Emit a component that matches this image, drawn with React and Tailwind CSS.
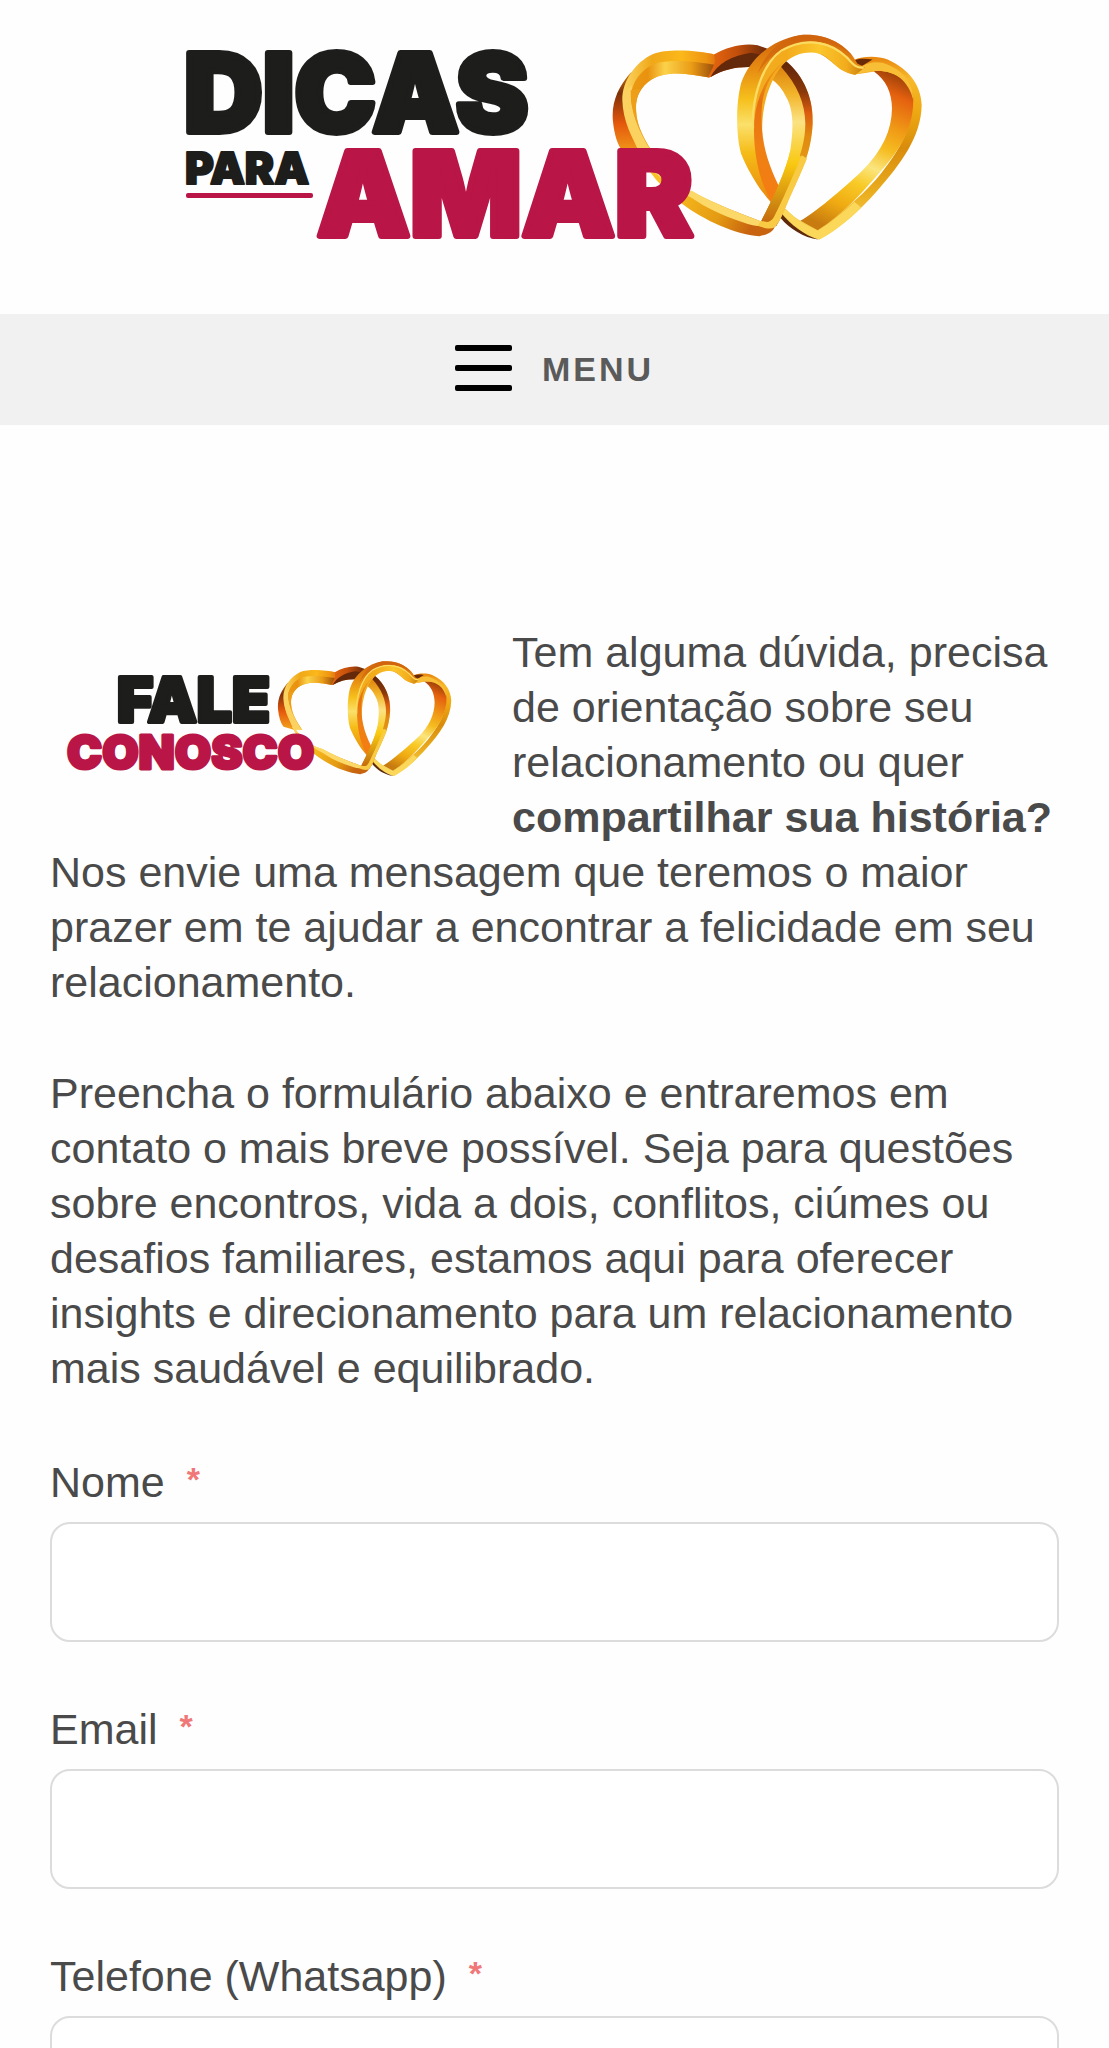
import React, { useState } from 'react';

const fields = [
  { id: 'nome', label: 'Nome', type: 'text' },
  { id: 'email', label: 'Email', type: 'email' },
  { id: 'telefone', label: 'Telefone (Whatsapp)', type: 'tel' },
];

// Two interlaced golden hearts, shared by both logos
const Rings = ({ id, ...props }) => (
  <svg viewBox="153 43 930 615" {...props}>
    <defs>
      <linearGradient id={`${id}-side`} x1="0" y1="0" x2="0" y2="1">
        <stop offset="0" stopColor="#c9780f" />
        <stop offset="0.25" stopColor="#7d3008" />
        <stop offset="0.6" stopColor="#e4570c" />
        <stop offset="1" stopColor="#f3a51c" />
      </linearGradient>
      <linearGradient id={`${id}-top`} x1="0" y1="0" x2="1" y2="0">
        <stop offset="0" stopColor="#fbd664" />
        <stop offset="0.3" stopColor="#f0a818" />
        <stop offset="0.6" stopColor="#fbb81a" />
        <stop offset="0.85" stopColor="#ee9412" />
        <stop offset="1" stopColor="#dc640e" />
      </linearGradient>
      <linearGradient id={`${id}-inner`} x1="0" y1="0" x2="1" y2="0">
        <stop offset="0" stopColor="#ea9a14" />
        <stop offset="0.2" stopColor="#e9920f" />
        <stop offset="0.4" stopColor="#fbd24a" />
        <stop offset="0.7" stopColor="#eb9c16" />
        <stop offset="1" stopColor="#8f4208" />
      </linearGradient>
      <linearGradient id={`${id}-lobe`} x1="0" y1="0" x2="1" y2="0">
        <stop offset="0" stopColor="#e9680f" />
        <stop offset="0.45" stopColor="#c4500c" />
        <stop offset="1" stopColor="#5e240a" />
      </linearGradient>
      <linearGradient id={`${id}-edge`} x1="0" y1="0" x2="0" y2="1">
        <stop offset="0" stopColor="#5e240a" />
        <stop offset="0.25" stopColor="#8a3809" />
        <stop offset="0.42" stopColor="#dc5d10" />
        <stop offset="0.6" stopColor="#e08a10" />
        <stop offset="1" stopColor="#e7a51c" />
      </linearGradient>
      <linearGradient id={`${id}-right`} gradientUnits="userSpaceOnUse" x1="0" y1="150" x2="0" y2="620">
        <stop offset="0" stopColor="#e08a12" />
        <stop offset="0.15" stopColor="#f2b42a" />
        <stop offset="0.33" stopColor="#fbe283" />
        <stop offset="0.6" stopColor="#f9c810" />
        <stop offset="0.85" stopColor="#d08a10" />
        <stop offset="1" stopColor="#c2620e" />
      </linearGradient>
      <linearGradient id={`${id}-bottom`} x1="0" y1="0" x2="1" y2="0.3">
        <stop offset="0" stopColor="#fbc92e" />
        <stop offset="0.4" stopColor="#f7b91d" />
        <stop offset="0.75" stopColor="#e49a12" />
        <stop offset="1" stopColor="#c8640f" />
      </linearGradient>
      <linearGradient id={`${id}-front`} x1="0" y1="0" x2="0" y2="1">
        <stop offset="0" stopColor="#d0620c" />
        <stop offset="0.2" stopColor="#e78c12" />
        <stop offset="0.38" stopColor="#f6c01c" />
        <stop offset="0.53" stopColor="#fbe06a" />
        <stop offset="0.7" stopColor="#f5bb16" />
        <stop offset="1" stopColor="#e8860f" />
      </linearGradient>
      <linearGradient id={`${id}-rim`} x1="0" y1="0" x2="1" y2="0">
        <stop offset="0" stopColor="#f2ac20" />
        <stop offset="0.3" stopColor="#f3ab1c" />
        <stop offset="0.6" stopColor="#fbc62c" />
        <stop offset="0.85" stopColor="#f3ac1c" />
        <stop offset="1" stopColor="#c9800f" />
      </linearGradient>
      <linearGradient id={`${id}-orange`} x1="0" y1="0" x2="0" y2="1">
        <stop offset="0" stopColor="#f0a01a" />
        <stop offset="0.3" stopColor="#e8700f" />
        <stop offset="0.6" stopColor="#ee8014" />
        <stop offset="1" stopColor="#f57c12" />
      </linearGradient>
      <linearGradient id={`${id}-wall`} gradientUnits="userSpaceOnUse" x1="1010" y1="150" x2="800" y2="620">
        <stop offset="0" stopColor="#8f3a08" />
        <stop offset="0.14" stopColor="#e5610f" />
        <stop offset="0.32" stopColor="#f09a16" />
        <stop offset="0.45" stopColor="#f5bc20" />
        <stop offset="0.58" stopColor="#fbe57e" />
        <stop offset="0.7" stopColor="#f8ca26" />
        <stop offset="0.85" stopColor="#f0ab12" />
        <stop offset="1" stopColor="#c87c10" />
      </linearGradient>
      <linearGradient id={`${id}-outer`} x1="0" y1="0" x2="0" y2="1">
        <stop offset="0" stopColor="#e8860f" />
        <stop offset="0.12" stopColor="#f8b82a" />
        <stop offset="0.3" stopColor="#eea812" />
        <stop offset="0.5" stopColor="#d98c0c" />
        <stop offset="0.75" stopColor="#eaae1e" />
        <stop offset="1" stopColor="#fbdc62" />
      </linearGradient>
    </defs>

    {/* left heart */}
    <path d="M212 155C170 200 150 250 156 305C160 345 170 375 185 395L245 412C205 350 185 260 212 155Z" fill={`url(#${id}-side)`} />
    <path d="M460 103C420 92 320 84 275 102C225 125 183 180 184 240C186 300 210 350 240 402L285 412C240 345 226 310 225 262C225 215 255 178 300 166C350 152 400 165 445 172C455 160 470 140 480 120Z" fill={`url(#${id}-top)`} />
    <path d="M462 134C420 128 350 116 290 128C240 145 212 185 208 235C206 262 212 290 225 315C222 290 223 262 226 245C232 210 260 176 300 166C350 152 400 165 445 172C452 162 462 148 470 136Z" fill={`url(#${id}-inner)`} />
    <path d="M192 215C180 280 205 340 245 410L285 412C240 345 222 310 210 240L212 195Z" fill="#fbd260" />
    <path d="M209 210C208 270 228 325 272 395L285 412C240 345 226 310 225 262C225 240 230 222 238 207Z" fill="#ee9f1a" />
    <path d="M459 103C500 80 545 68 590 75L632 90L600 143C545 136 490 145 450 170L440 172C452 155 455 140 462 125Z" fill={`url(#${id}-lobe)`} />
    <path d="M448 171C470 130 510 108 570 98L625 108L600 143C545 136 495 143 448 171Z" fill="#64280a" />
    <path d="M240 395C290 470 340 500 395 515C460 552 545 582 600 604L640 598C647 620 640 640 595 648C520 642 430 600 365 552C310 510 270 470 230 395Z" fill={`url(#${id}-bottom)`} />
    <path d="M240 395C290 475 340 500 395 513C460 552 545 582 600 603L640 598L632 610C612 624 580 618 545 606C480 585 430 560 395 535C330 500 270 460 230 395Z" fill="#fbd868" />
    <path d="M668 120C730 165 758 240 755 310C750 400 718 460 685 530C670 570 660 595 645 618L600 604C645 515 675 450 688 390C698 320 698 270 675 230C665 208 650 190 630 176L650 140Z" fill={`url(#${id}-right)`} />
    <path d="M672 120C732 168 758 240 755 310C750 400 725 440 700 500L695 470C720 400 733 360 733 310C732 250 710 195 660 140Z" fill={`url(#${id}-edge)`} />

    {/* right heart */}
    <path d="M882 118C905 108 950 106 980 118C1045 148 1080 195 1082 255C1080 350 1020 430 950 510C890 580 820 635 775 658C735 650 690 615 660 580L672 565C690 582 705 595 722 604L770 628C850 575 920 510 960 460C1030 370 1055 310 1055 240C1055 200 1010 155 945 153L888 162Z" fill={`url(#${id}-outer)`} />
    <path d="M938 153C1000 148 1052 180 1057 235C1058 310 1030 370 975 435C910 510 850 580 770 630L718 602C760 578 840 512 905 450C965 390 992 330 993 265C992 215 975 180 938 153Z" fill={`url(#${id}-wall)`} />
    <path d="M880 120C900 114 915 115 935 118L905 136L892 140Z" fill="#6a2a08" />
    <path d="M883 163C895 138 925 120 965 128C1030 150 1056 190 1057 240C1042 180 1000 148 938 153L905 158Z" fill="#f8be35" />
    <path d="M662 578L674 566C690 584 705 596 722 606C740 618 758 628 772 632C800 615 850 575 880 545L900 562C860 605 810 640 775 658C735 650 690 615 662 585Z" fill="#fbd75a" />
    <path d="M660 578C690 615 730 645 772 658C728 653 685 625 660 595Z" fill="#5e2a0a" />
    <path d="M889 130C855 65 785 38 715 45C635 58 565 115 540 190C525 250 524 340 540 400C560 450 595 510 635 552L650 497C590 420 578 320 600 240C620 170 665 92 740 90C800 95 820 150 883 164L912 142Z" fill={`url(#${id}-front)`} />
    <path d="M905 146C885 150 870 125 850 105C825 75 775 58 725 66C645 82 590 165 581 240C570 320 585 380 600 430L640 500C600 410 595 310 615 235C640 150 680 97 750 97C815 98 810 152 883 164Z" fill={`url(#${id}-rim)`} />
    <path d="M683 115C635 150 605 200 602 270C598 350 615 420 653 497L635 550C595 490 574 390 580 300C588 220 625 150 683 115Z" fill={`url(#${id}-orange)`} />
    <path d="M576 325C572 240 600 135 660 92C740 45 815 70 858 112C880 138 890 145 908 142" fill="none" stroke="#fbdc62" strokeWidth="7" />
    <path d="M715 45C780 38 840 60 884 118C850 78 790 55 722 63C670 72 620 110 590 160C610 105 650 60 715 45Z" fill="#cf640e" opacity="0.65" />

    {/* the left heart passes back over the right one near its tip */}
    <path d="M688 390C675 450 645 515 600 604L645 618C660 595 670 570 685 530C700 500 715 465 735 420L700 395Z" fill={`url(#${id}-right)`} />
    <path d="M738 415C715 470 690 525 670 570C660 595 652 610 640 622C625 630 605 622 590 616L600 602C620 608 628 606 638 592C665 540 695 470 722 405Z" fill="#f9cb44" />
  </svg>
);

const SiteLogo = () => (
  <svg viewBox="0 0 744 252" className="w-[744px] max-w-full" role="img" aria-label="Dicas para Amar">
    <Rings id="site" x="429" y="20" width="310" height="206" />
    <g fontFamily="Inter, sans-serif" fontWeight="900" strokeLinejoin="round">
      <text x="1" y="118" fontSize="109" fontKerning="none" fill="#1d1d1b" stroke="#1d1d1b" strokeWidth="6">DICAS</text>
      <text x="2" y="170" fontSize="44" fontKerning="none" fill="#1d1d1b" stroke="#1d1d1b" strokeWidth="2">PARA</text>
      <text x="134" y="222" fontSize="117" fontKerning="none" fill="#b91547" stroke="#b91547" strokeWidth="6">AMAR</text>
    </g>
    <rect x="3" y="179" width="127" height="5" rx="2" fill="#b91547" />
  </svg>
);

const ContactLogo = () => (
  <svg viewBox="0 0 432 160" className="w-full" role="img" aria-label="Fale Conosco">
    <Rings id="contact" x="227" y="36" width="175" height="115" />
    <g fontFamily="Inter, sans-serif" fontWeight="900" strokeLinejoin="round">
      <text x="67" y="97" fontSize="62" fontKerning="none" fill="#1d1d1b" stroke="#1d1d1b" strokeWidth="4">FALE</text>
      <text x="17" y="144" fontSize="47" fontKerning="none" fill="#b91547" stroke="#b91547" strokeWidth="3">CONOSCO</text>
    </g>
  </svg>
);

const App = () => {
  const [values, setValues] = useState({});
  const [menuOpen, setMenuOpen] = useState(false);

  const handleChange = (e) => {
    setValues({ ...values, [e.target.name]: e.target.value });
  };

  return (
    <div className="h-screen overflow-x-hidden overflow-y-auto [scrollbar-width:none] bg-[#fefefe] text-[#4a4a4a] font-['Liberation_Sans',Arial,sans-serif] text-[43px] leading-[55px]">
      <header>
        <div className="flex justify-center px-4 pt-[14px] pb-12">
          <a href="#inicio" className="block">
            <SiteLogo />
          </a>
        </div>
        <nav className="flex justify-center bg-[#f1f1f1]">
          <button
            type="button"
            aria-expanded={menuOpen}
            onClick={() => setMenuOpen(!menuOpen)}
            className="flex h-[111px] items-center gap-[30px]"
          >
            <svg viewBox="0 0 57 46" className="mb-1 h-[46px] w-[57px]" aria-hidden="true">
              <rect y="0" width="57" height="6" rx="2" />
              <rect y="20" width="57" height="6" rx="2" />
              <rect y="40" width="57" height="6" rx="2" />
            </svg>
            <span className="text-[34px] font-bold tracking-[3px] text-[#5a5a5a]">MENU</span>
          </button>
        </nav>
      </header>

      <main className="px-[50px] pt-[200px]">
        <div className="float-left mr-[30px] w-[432px] pb-4">
          <ContactLogo />
        </div>
        <p>
          Tem alguma dúvida, precisa de orientação sobre seu relacionamento ou quer{' '}
          <strong>compartilhar sua história?</strong> Nos envie uma mensagem que teremos o maior
          prazer em te ajudar a encontrar a felicidade em seu relacionamento.
        </p>
        <p className="mt-14">
          Preencha o formulário abaixo e entraremos em contato o mais breve possível. Seja para
          questões sobre encontros, vida a dois, conflitos, ciúmes ou desafios familiares, estamos
          aqui para oferecer insights e direcionamento para um relacionamento mais saudável e
          equilibrado.
        </p>

        <form className="mt-[59px] space-y-[60px]">
          {fields.map((field) => (
            <div key={field.id}>
              <label htmlFor={field.id} className="flex gap-[22px]">
                {field.label}
                <span className="text-[34px] font-bold leading-[48px] text-[#f07878]">*</span>
              </label>
              <input
                id={field.id}
                name={field.id}
                type={field.type}
                required
                value={values[field.id] || ''}
                onChange={handleChange}
                className="mt-3 block h-[120px] w-full rounded-[20px] border-2 border-[#dcdcdc] bg-white px-6"
              />
            </div>
          ))}
        </form>
      </main>
    </div>
  );
};

export default App;
